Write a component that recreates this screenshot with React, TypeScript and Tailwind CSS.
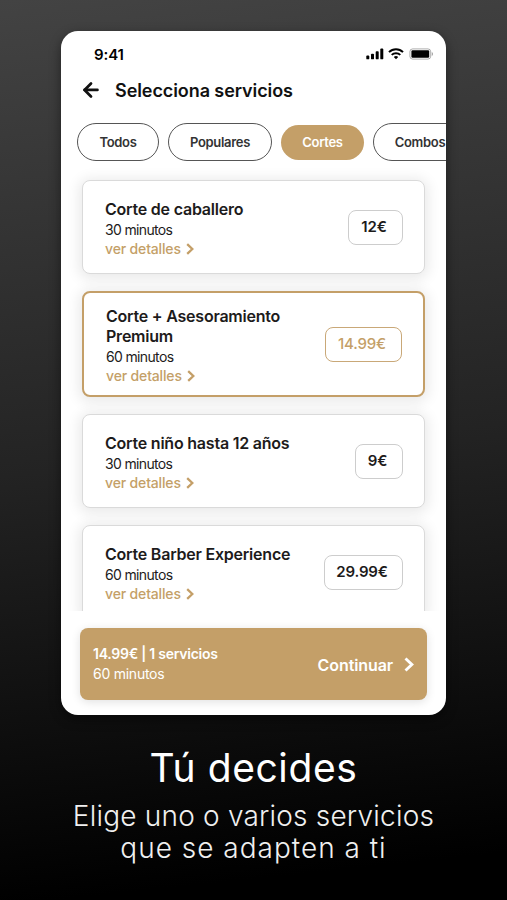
import { ArrowLeft } from "lucide-react";
import clsx from "clsx";

const filters = [
  { label: "Todos", width: "w-[82px]" },
  { label: "Populares", width: "w-[104px]" },
  { label: "Cortes", width: "w-[83px]", active: true },
  { label: "Combos", width: "w-[94px]" },
];

const services = [
  { title: "Corte de caballero", time: "30 minutos", price: "12€", size: "w-[55px]" },
  { title: "Corte + Asesoramiento Premium", time: "60 minutos", price: "14.99€", size: "w-[77px]", selected: true },
  { title: "Corte niño hasta 12 años", time: "30 minutos", price: "9€", size: "w-[48px]" },
  { title: "Corte Barber Experience", time: "60 minutos", price: "29.99€", size: "w-[79px]" },
];

const StatusBar = () => (
  <div className="flex h-[46px] items-center justify-between pl-[33px] pr-[12px]">
    <span className="text-[15px] font-semibold leading-none tracking-[-0.1px] text-black">9:41</span>
    <div className="flex items-center">
      <svg width="18" height="12" viewBox="0 0 18 12" fill="#000">
        <rect x="0.3" y="7.5" width="3" height="3.8" rx="0.9" />
        <rect x="5" y="5.7" width="3" height="5.6" rx="0.9" />
        <rect x="9.7" y="3.2" width="3" height="8.1" rx="0.9" />
        <rect x="14.3" y="0.6" width="3" height="10.7" rx="0.9" />
      </svg>
      <svg className="ml-1" width="16" height="12" viewBox="0 0 16 12" fill="none" stroke="#000" strokeWidth="2">
        <path d="M1 4.1a10 10 0 0 1 14 0" />
        <path d="M3.7 6.9a6.2 6.2 0 0 1 8.6 0" />
        <path d="M8 11.3 5.8 9.1a3.2 3.2 0 0 1 4.4 0z" fill="#000" stroke="none" />
      </svg>
      <svg className="ml-[5px]" width="25" height="12" viewBox="0 0 25 12">
        <rect x="0.9" y="0.9" width="20.8" height="10.2" rx="2.8" fill="none" stroke="#000" strokeOpacity="0.32" />
        <rect x="2.4" y="2.3" width="17.8" height="7.4" rx="1.2" />
        <path d="M22.8 4v4c1.5-.7 1.5-3.3 0-4z" fillOpacity="0.4" />
      </svg>
    </div>
  </div>
);

const Chevron = ({ className }: { className: string }) => (
  <svg className={className} viewBox="0 0 8 12" fill="none" stroke="currentColor" strokeWidth="2.3">
    <path d="M1.2 1.2 6.3 6l-5.1 4.8" />
  </svg>
);

const ServiceCard = ({ title, time, price, size, selected }: (typeof services)[number]) => (
  <div
    className={clsx(
      "flex w-[343px] shrink-0 items-center justify-between rounded-lg bg-white pr-[21px] shadow-[0_2px_14px_3px_rgba(0,0,0,0.09)]",
      selected ? "h-[106px] border-2 border-[#c49f68] pl-[22px]" : "h-[94px] border border-[#dadada] pl-[22px]"
    )}
  >
    <div className="w-[200px] pt-[2px] text-[#1d1b1b]">
      <h2 className="text-base font-semibold leading-5 tracking-[-0.22px]">{title}</h2>
      <p className="text-sm leading-[21px] tracking-[-0.65px]">{time}</p>
      <p className="flex items-center text-sm font-medium leading-[18px] tracking-[-0.15px] text-[#c49f68]">
        ver detalles
        <Chevron className="ml-[5px] mt-px h-3 w-2" />
      </p>
    </div>
    <div
      className={clsx(
        "flex h-[35px] items-center justify-center rounded-lg border pr-[3px] text-[15px] tracking-[-0.15px]",
        size,
        selected ? "border-[#c9a878] font-medium text-[#c49f68]" : "border-[#cdcdcd] font-semibold text-[#1d1b1b]"
      )}
    >
      {price}
    </div>
  </div>
);

export default function App() {
  return (
    <main className="flex h-[900px] w-[507px] flex-col items-center overflow-hidden bg-linear-[174deg] from-[#434343] via-[#232323] to-black to-95% pt-[31px] font-['Inter',sans-serif]">
      <div className="flex h-[684px] w-[385px] shrink-0 flex-col overflow-hidden rounded-[17px] bg-white shadow-[0_4px_12px_rgba(0,0,0,0.45)]">
        <StatusBar />
        <header className="flex h-[26px] items-center gap-[14px] pl-5 text-[#111]">
          <ArrowLeft size={20} strokeWidth={3} className="scale-110" />
          <h1 className="pt-px text-lg font-semibold leading-none tracking-[-0.08px]">Selecciona servicios</h1>
        </header>

        <nav className="mt-5 flex h-[38px] shrink-0 items-center gap-[9px] pl-4">
          {filters.map((f) => (
            <button
              key={f.label}
              className={clsx(
                "flex shrink-0 items-center justify-center rounded-full pt-px text-[13px] font-semibold tracking-[-0.3px]",
                f.width,
                f.active ? "h-[35px] bg-[#c49f68] text-white" : "h-[38px] border border-[#555] text-[#333]"
              )}
            >
              {f.label}
            </button>
          ))}
        </nav>

        <section className="flex h-[450px] shrink-0 flex-col gap-[17px] overflow-hidden pl-[21px] pt-[19px]">
          {services.map((s) => (
            <ServiceCard key={s.title} {...s} />
          ))}
        </section>

        <footer className="flex flex-1 justify-center pt-[17px]">
          <div className="flex h-[72px] w-[347px] items-center justify-between rounded-lg bg-[#c49f68] pl-[13px] pr-[13px] text-white shadow-[0_2px_10px_rgba(0,0,0,0.12)]">
            <div className="text-sm leading-5">
              <p className="font-semibold tracking-[-0.25px]">14.99€ | 1 servicios</p>
              <p className="tracking-[-0.25px]">60 minutos</p>
            </div>
            <div className="flex items-center gap-[11px] pt-px text-base font-semibold tracking-[-0.1px]">
              Continuar
              <Chevron className="h-[15px] w-[10px]" />
            </div>
          </div>
        </footer>
      </div>

      <div className="mt-[30px] text-center text-white">
        <h2 className="text-[39px] leading-[46px] tracking-[0.6px]">Tú decides</h2>
        <p className="mt-[9px] text-[28px] font-light leading-8 text-[#f0f0f0]">
          <span className="block tracking-[0.2px]">Elige uno o varios servicios</span>
          <span className="block tracking-[1px]">que se adapten a ti</span>
        </p>
      </div>
    </main>
  );
}
